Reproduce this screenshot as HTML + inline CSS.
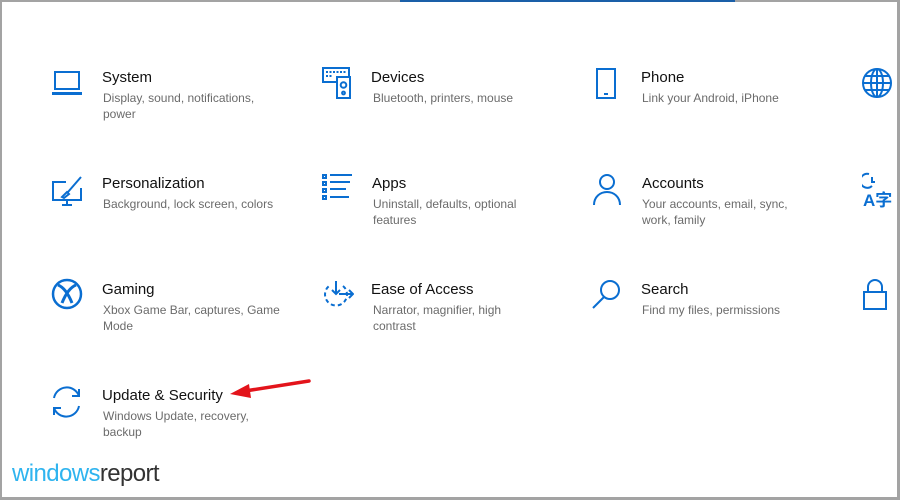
<!DOCTYPE html>
<html><head><style>
*{margin:0;padding:0;box-sizing:border-box}
body{width:900px;height:500px;overflow:hidden;background:#fff;font-family:"Liberation Sans",sans-serif;position:relative}
.frame{position:absolute;left:0;top:0;width:900px;height:500px;border-top:2px solid #a3a3a3;border-left:2px solid #a3a3a3;border-right:3px solid #a3a3a3;border-bottom:3px solid #a3a3a3}
.blue{position:absolute;left:400px;top:0;width:335px;height:2px;background:#1a5fa8}
.it{position:absolute;width:260px}
.it svg{position:absolute;left:0;top:0}
.t{position:absolute;top:0;font-size:15px;color:#111;line-height:20px;white-space:nowrap}
.d{position:absolute;top:22px;font-size:12px;color:#6b6b6b;line-height:16px;width:172px}
.logo{position:absolute;left:12px;top:460px;font-size:24px;letter-spacing:-0.6px}
</style></head><body>
<div class="frame"></div><div class="blue"></div>

<div class="it" style="left:50px;top:68px">
<svg width="34" height="34" viewBox="0 0 34 34" fill="none" stroke="#0a6ed1" stroke-width="2"><rect x="5" y="4" width="24" height="17"/><path d="M3 25h28v1H3z"/></svg>
<div class="t" style="left:52px">System</div><div class="d" style="left:53px">Display, sound, notifications, power</div></div>

<div class="it" style="left:320px;top:68px">
<svg style="top:-2px" width="34" height="34" viewBox="0 0 34 34" fill="none" stroke="#0a6ed1" stroke-width="2"><rect x="3" y="2" width="26" height="14"/><path d="M6 6h20M6 10h7" stroke-dasharray="2 1.5"/><rect x="17" y="11" width="13" height="21" fill="#fff"/><circle cx="23.5" cy="19" r="2.8"/><circle cx="23.5" cy="27" r="1.4"/></svg>
<div class="t" style="left:51px">Devices</div><div class="d" style="left:53px">Bluetooth, printers, mouse</div></div>

<div class="it" style="left:590px;top:68px">
<svg width="34" height="34" viewBox="0 0 34 34" fill="none" stroke="#0a6ed1" stroke-width="2"><rect x="7" y="1" width="18" height="29"/><path d="M14 26h4"/></svg>
<div class="t" style="left:51px">Phone</div><div class="d" style="left:52px">Link your Android, iPhone</div></div>

<svg style="position:absolute;left:860px;top:66px" width="34" height="34" viewBox="0 0 34 34" fill="none" stroke="#0a6ed1" stroke-width="2"><circle cx="17" cy="17" r="14"/><ellipse cx="17" cy="17" rx="6" ry="14"/><path d="M3 17h28M5 10h24M5 24h24M17 3v28"/></svg>

<div class="it" style="left:50px;top:174px">
<svg width="34" height="34" viewBox="0 0 34 34" fill="none" stroke="#0a6ed1" stroke-width="2"><path d="M16 8H3v18h28V14"/><path d="M12 31h10M17 26v5"/><path d="M31 3L18 18M12 23l5-5 2 2-5 4z"/></svg>
<div class="t" style="left:52px">Personalization</div><div class="d" style="left:53px;width:190px">Background, lock screen, colors</div></div>

<div class="it" style="left:320px;top:174px">
<svg width="34" height="34" viewBox="0 0 34 34" fill="none" stroke="#0a6ed1" stroke-width="2"><rect x="3" y="1" width="3" height="3"/><rect x="3" y="8" width="3" height="3"/><rect x="3" y="15" width="3" height="3"/><rect x="3" y="22" width="3" height="3"/><path d="M10 1h22M10 8h20M10 15h16M10 23h19"/></svg>
<div class="t" style="left:52px">Apps</div><div class="d" style="left:53px;width:160px">Uninstall, defaults, optional features</div></div>

<div class="it" style="left:590px;top:174px">
<svg width="34" height="34" viewBox="0 0 34 34" fill="none" stroke="#0a6ed1" stroke-width="2"><circle cx="17" cy="8" r="7"/><path d="M4 31c0-8 6-13 13-13s13 5 13 13"/></svg>
<div class="t" style="left:52px">Accounts</div><div class="d" style="left:52px;width:150px">Your accounts, email, sync, work, family</div></div>

<div style="position:absolute;left:860px;top:172px;width:40px;height:36px;color:#0a6ed1">
<svg width="20" height="20" viewBox="0 0 20 20" fill="none" stroke="#0a6ed1" stroke-width="2" style="position:absolute;left:2px;top:0"><path d="M7 2a7 7 0 1 0 3 12"/><path d="M10 5v5h3"/></svg>
<div style="position:absolute;left:3px;top:14px;font-size:17px;font-weight:bold;font-family:'Liberation Sans','Noto Sans CJK SC',sans-serif">A字</div></div>

<div class="it" style="left:50px;top:278px">
<svg width="34" height="34" viewBox="0 0 34 34" fill="none" stroke="#0a6ed1" stroke-width="2.5"><circle cx="17" cy="16" r="14"/><path d="M8 7c5 2 10 8 14 18M26 7c-5 2-10 8-14 18" stroke-width="3"/></svg>
<div class="t" style="left:52px;top:2px">Gaming</div><div class="d" style="left:53px;top:24px;width:180px">Xbox Game Bar, captures, Game Mode</div></div>

<div class="it" style="left:320px;top:280px">
<svg width="34" height="34" viewBox="0 0 34 34" fill="none" stroke="#0a6ed1" stroke-width="2"><path d="M23 6A11 11 0 1 1 9 6" stroke-dasharray="4 3"/><path d="M16 1v13M12 10l4 4 4-4M19 14h14M29 10l4 4-4 4"/></svg>
<div class="t" style="left:51px">Ease of Access</div><div class="d" style="left:53px;width:150px">Narrator, magnifier, high contrast</div></div>

<div class="it" style="left:590px;top:280px">
<svg width="34" height="34" viewBox="0 0 34 34" fill="none" stroke="#0a6ed1" stroke-width="2"><circle cx="20" cy="10" r="9"/><path d="M14 17L3 28"/></svg>
<div class="t" style="left:51px">Search</div><div class="d" style="left:52px">Find my files, permissions</div></div>

<svg style="position:absolute;left:860px;top:278px" width="34" height="36" viewBox="0 0 34 36" fill="none" stroke="#0a6ed1" stroke-width="2"><path d="M8 14V9a7 7 0 0 1 14 0v5"/><rect x="4" y="14" width="22" height="17"/></svg>

<div class="it" style="left:50px;top:386px">
<svg width="34" height="34" viewBox="0 0 34 34" fill="none" stroke="#0a6ed1" stroke-width="2"><path d="M4 12A13 13 0 0 1 29 10"/><path d="M29 3v7h-7"/><path d="M29 20A13 13 0 0 1 4 22"/><path d="M4 29v-7h7"/></svg>
<div class="t" style="left:52px">Update &amp; Security</div><div class="d" style="left:53px;width:160px">Windows Update, recovery, backup</div></div>

<svg style="position:absolute;left:225px;top:376px" width="90" height="26" viewBox="0 0 90 26"><path d="M84 5L20 15" stroke="#e3141b" stroke-width="3.5" stroke-linecap="round"/><path d="M5 18L24 8L26 22z" fill="#e3141b"/></svg>

<div class="logo"><span style="color:#2fb4ef">windows</span><span style="color:#333">report</span></div>
</body></html>
